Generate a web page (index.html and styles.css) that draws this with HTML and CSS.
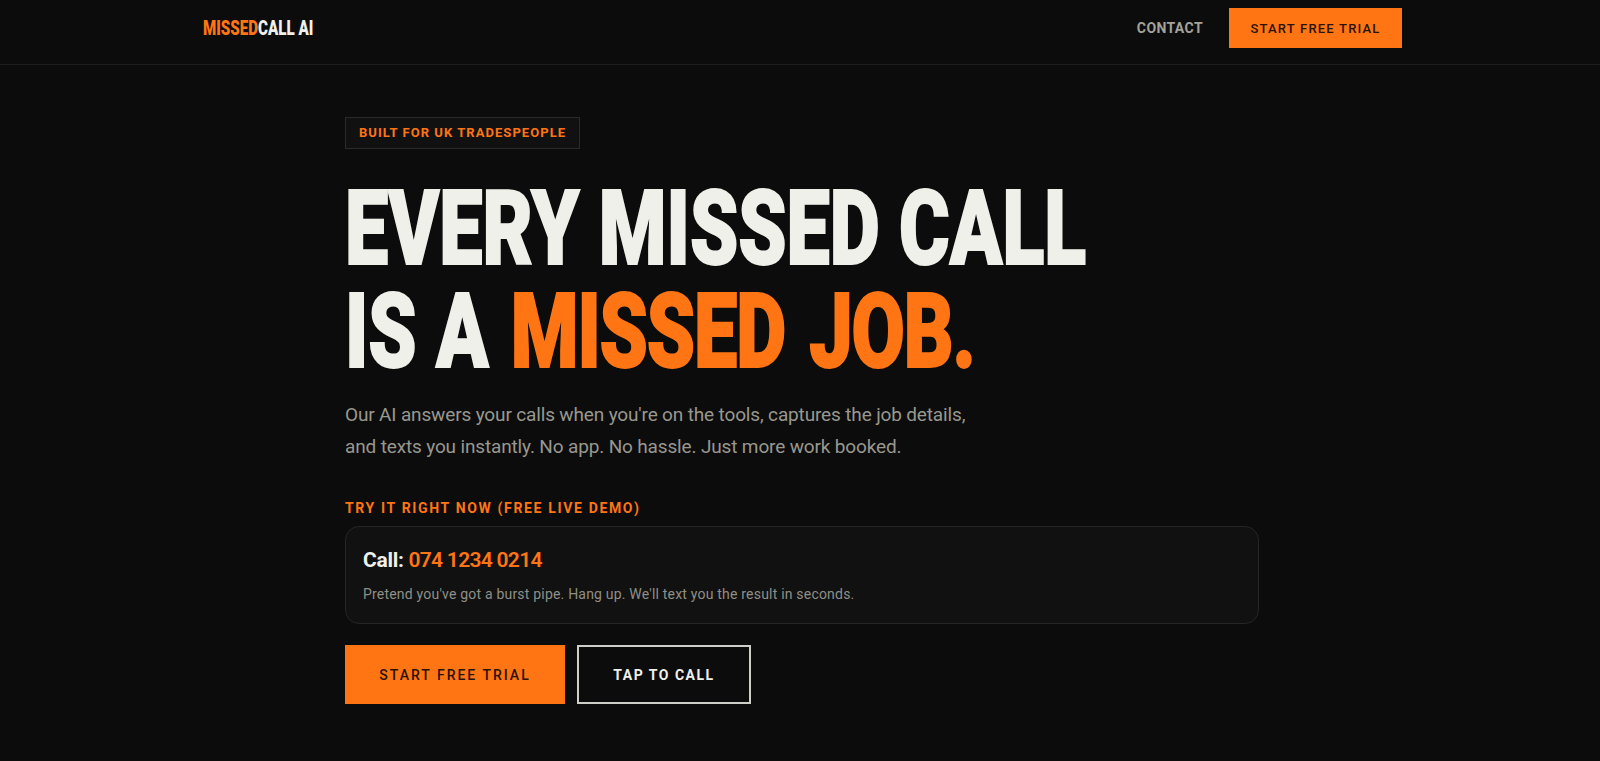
FILE: index.html
```html
<!DOCTYPE html>
<html lang="en">
<head>
    <meta charset="UTF-8">
    <meta name="viewport" content="width=device-width, initial-scale=1.0">
    <title>MissedCall AI</title>
    <link rel="stylesheet" href="styles.css">
</head>
<body>
    <nav class="nav">
        <a class="logo" href="#"><span class="accent">MISSED</span>CALL AI</a>
        <div class="nav-links">
            <a class="nav-link" href="#">CONTACT</a>
            <a class="btn btn-small" href="#">START FREE TRIAL</a>
        </div>
    </nav>

    <main class="hero">
        <div class="badge">BUILT FOR UK TRADESPEOPLE</div>
        <h1 class="headline">EVERY MISSED CALL<br>IS A <span class="accent headline-accent">MISSED JOB.</span></h1>
        <p class="lead">Our AI answers your calls when you're on the tools, captures the job details,<br>and texts you instantly. No app. No hassle. Just more work booked.</p>

        <div class="demo-label">TRY IT RIGHT NOW (FREE LIVE DEMO)</div>
        <div class="demo-card">
            <div class="demo-number">Call: <span class="accent phone">074 1234 0214</span></div>
            <div class="demo-note">Pretend you've got a burst pipe. Hang up. We'll text you the result in seconds.</div>
        </div>

        <div class="actions">
            <a class="btn btn-large" href="#">START FREE TRIAL</a>
            <a class="btn btn-outline" href="#">TAP TO CALL</a>
        </div>
    </main>
</body>
</html>
```

FILE: styles.css
```css
* { box-sizing: border-box; }
body { margin: 0; background: #0c0c0c; color: #f0f0ea; font-family: 'Roboto', 'Liberation Sans', sans-serif; overflow: hidden; }
a { text-decoration: none; color: inherit; }
.accent { color: #ff7514; }

.nav { display: flex; justify-content: space-between; align-items: center; height: 65px; padding: 0 198px 8px 203px; border-bottom: 1px solid #1e1e1e; }
/* no condensed face installed, so squeeze the heavy one */
.logo { display: inline-block; font-weight: 900; font-size: 21px; white-space: nowrap; transform: scaleX(0.72); transform-origin: left center; }
.nav-links { display: flex; align-items: center; gap: 26px; }
.nav-link { font-size: 14px; font-weight: 700; letter-spacing: 0.4px; color: #a3a39b; }

.btn { display: flex; align-items: center; justify-content: center; background: #ff7514; color: #2a1206; font-weight: 500; letter-spacing: 1.2px; }
.btn-small { width: 173px; height: 40px; font-size: 13px; }
.btn-large { width: 220px; height: 59px; font-size: 14px; letter-spacing: 2px; }
.btn-outline { width: 174px; height: 59px; background: transparent; border: 2px solid #cfcfc9; color: #f0f0ea; font-size: 14px; font-weight: 700; letter-spacing: 1.5px; }

.hero { padding: 52px 341px 0 345px; }
.badge { display: inline-block; height: 32px; padding: 0 13px; border: 1px solid #2a2a2a; background: #111; color: #ff7514; font-size: 13px; font-weight: 700; letter-spacing: 1.05px; line-height: 30px; }
.headline { margin: 28px 0 0; font-size: 103px; font-weight: 900; line-height: 103px; white-space: nowrap; -webkit-text-stroke: 2px currentColor; transform: scaleX(0.75); transform-origin: left center; }
.headline-accent { letter-spacing: -1.5px; word-spacing: 8px; margin-left: 4px; }
.lead { margin: 16px 0 0; font-size: 19px; line-height: 32px; color: #98988f; letter-spacing: -0.15px; }

.demo-label { margin-top: 35px; color: #ff7514; font-size: 14px; font-weight: 700; letter-spacing: 1.65px; line-height: 20px; }
.demo-card { height: 98px; margin-top: 8px; padding: 20px 17px; background: #111; border: 1px solid #262626; border-radius: 14px; }
.demo-number { font-size: 21px; font-weight: 700; line-height: 26px; letter-spacing: -0.3px; }
.phone { font-weight: 600; letter-spacing: -0.7px; }
.demo-note { margin-top: 11px; font-size: 14px; line-height: 20px; color: #8f8f87; letter-spacing: 0.2px; }

.actions { display: flex; gap: 12px; margin-top: 21px; }
```
